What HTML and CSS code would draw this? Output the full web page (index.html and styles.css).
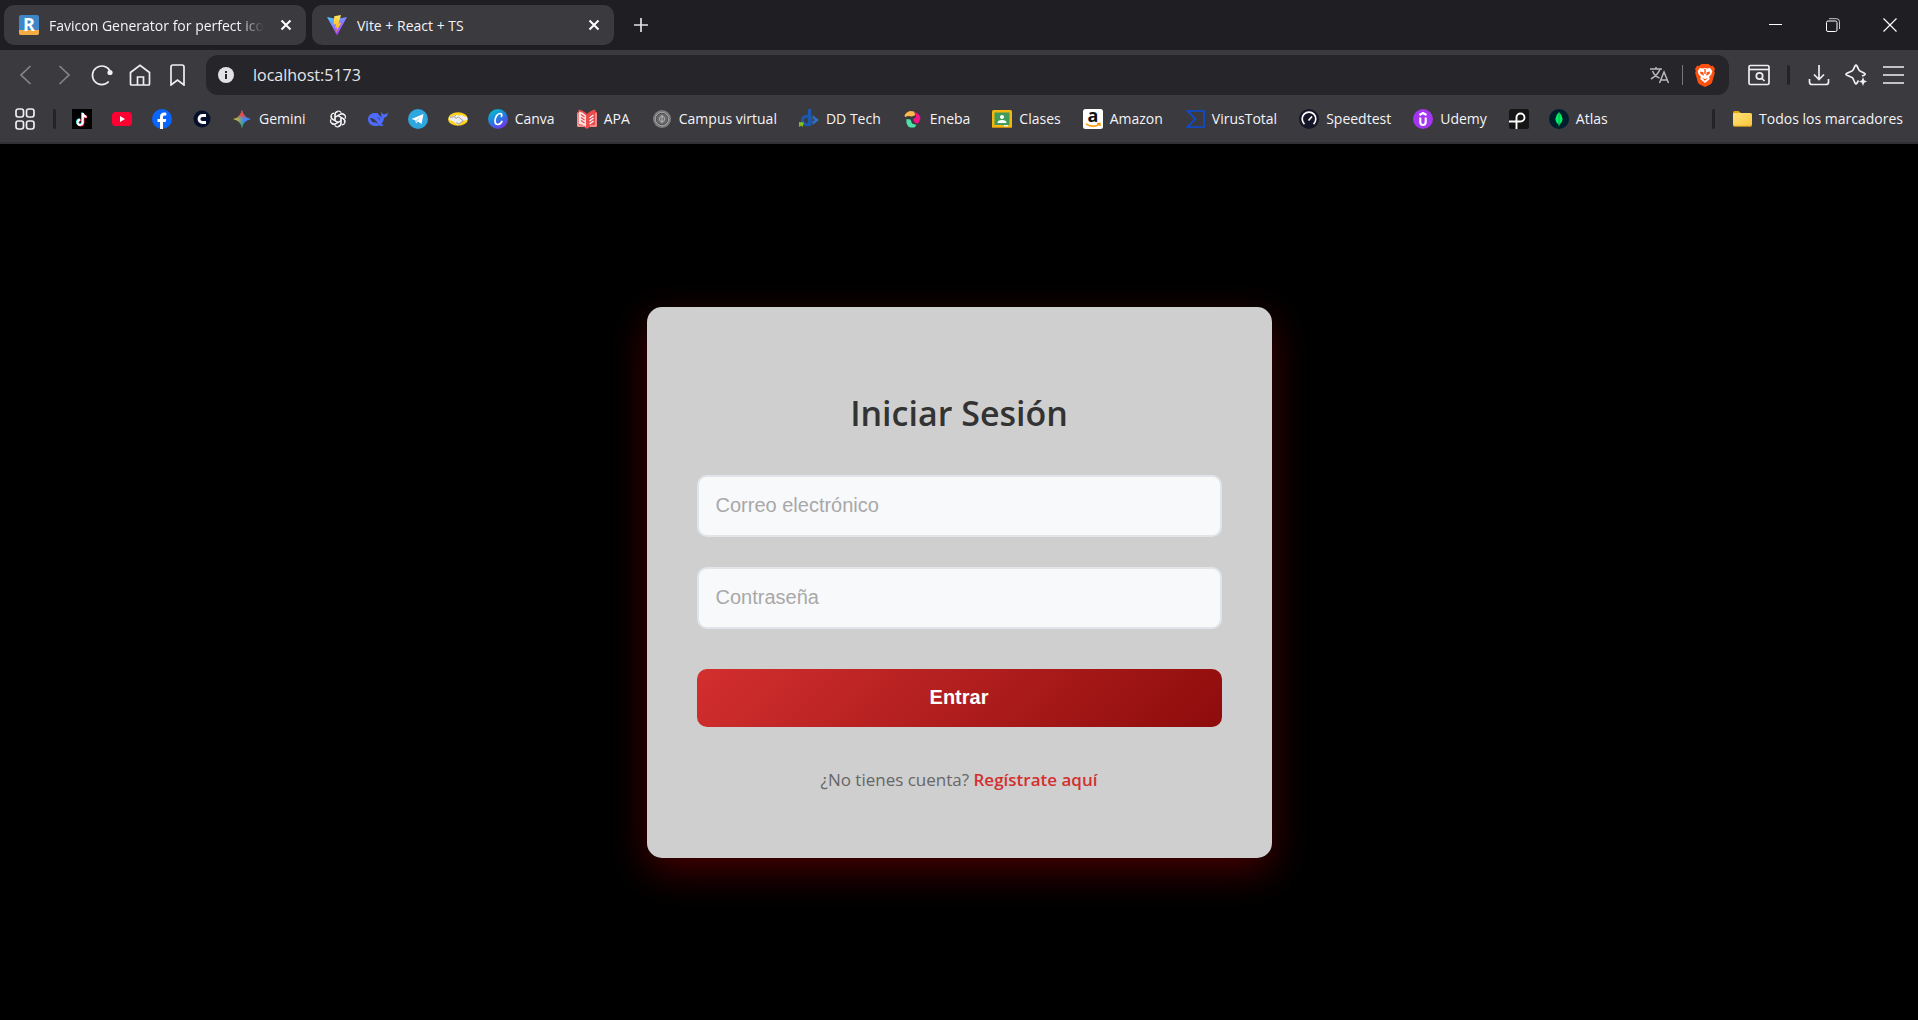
FILE: index.html
```html
<!DOCTYPE html>
<html lang="es">
<head>
<meta charset="utf-8">
<meta name="viewport" content="width=device-width, initial-scale=1">
<title>Vite + React + TS</title>
<link rel="stylesheet" href="styles.css">
</head>
<body>
<header class="browser">
  <div class="tabstrip">
    <div class="tabs">
      <div class="tab">
        <svg class="icon" viewBox="0 0 20 20" aria-hidden="true"><rect width="20" height="20" rx="2" fill="#3f86c8"/><path d="M0 15h20v3a2 2 0 0 1-2 2H2a2 2 0 0 1-2-2z" fill="#f2ac43"/><text x="10" y="16" text-anchor="middle" font-size="18" class="glyph-bold" fill="#fff">R</text></svg>
        <span class="tab-title tab-title-long">Favicon Generator for perfect icons</span>
        <button class="tab-close" aria-label="Cerrar pestaña"><svg width="12" height="12" viewBox="0 0 12 12"><path d="M1.500 1.500l9 9M10.500 1.500l-9 9" stroke="#fff" stroke-width="2"/></svg></button>
      </div>
      <div class="tab">
        <svg class="icon" viewBox="0 0 20 20" aria-hidden="true"><defs><linearGradient id="vite" x1="0" y1="0" x2=".6" y2="1"><stop offset="0" stop-color="#41d1ff"/><stop offset="1" stop-color="#bd34fe"/></linearGradient><linearGradient id="bolt" x1="0" y1="0" x2="0" y2="1"><stop offset="0" stop-color="#ffea60"/><stop offset="1" stop-color="#ffa800"/></linearGradient></defs><path d="M0 2l10 2 10-2-9.500 17.500q-.5.8-1 0z" fill="url(#vite)"/><path d="M14 0L7.300 1.300 6.500 9.500l2.500-.5-.8 4 2-.6-1.300 4.800L14.200 8l-2.700.5z" fill="url(#bolt)"/></svg>
        <span class="tab-title">Vite + React + TS</span>
        <button class="tab-close" aria-label="Cerrar pestaña"><svg width="12" height="12" viewBox="0 0 12 12"><path d="M1.500 1.500l9 9M10.500 1.500l-9 9" stroke="#fff" stroke-width="2"/></svg></button>
      </div>
    </div>
    <button class="new-tab" aria-label="Nueva pestaña"><svg width="14" height="14" viewBox="0 0 14 14"><path d="M7 0v14M0 7h14" stroke="#e2e1e5" stroke-width="1.700"/></svg></button>
    <div class="window-controls">
      <button aria-label="Minimizar"><svg width="14" height="14" viewBox="0 0 14 14"><path d="M0 6.500h13" stroke="#fff"/></svg></button>
      <button aria-label="Restaurar"><svg width="14" height="14" viewBox="0 0 14 14" fill="none" stroke="#fff"><rect x=".5" y="3" width="10.500" height="10.500" rx="1.500"/><path d="M3 .7h7.500q3 0 3 3V11" stroke-opacity=".75"/></svg></button>
      <button aria-label="Cerrar"><svg width="14" height="14" viewBox="0 0 14 14"><path d="M.5.5l13 13M13.500.5l-13 13" stroke="#fff" stroke-width="1.200"/></svg></button>
    </div>
  </div>

  <div class="toolbar">
    <nav class="tools" aria-label="Navegación">
      <button aria-label="Atrás"><svg class="muted" width="22" height="22" viewBox="0 0 22 22"><path d="M15.500 2L6 11l9.500 9"/></svg></button>
      <button aria-label="Adelante"><svg class="muted" width="22" height="22" viewBox="0 0 22 22"><path d="M6.500 2L16 11l-9.500 9"/></svg></button>
      <button aria-label="Recargar"><svg width="22" height="22" viewBox="0 0 22 22"><path d="M17.700 17.500A9.300 9.300 0 1 1 19 7"/><circle cx="19" cy="8.500" r="2.600" fill="#efeef2" stroke="none"/></svg></button>
      <button aria-label="Inicio"><svg width="22" height="22" viewBox="0 0 22 22"><path d="M1.500 8.500L11 1.300l9.500 7.200V20q0 1-1 1h-5v-8h-6v8h-6q-1 0-1-1z M8.500 21h6"/></svg></button>
      <button aria-label="Añadir marcador"><svg width="22" height="22" viewBox="0 0 22 22"><path d="M4 3q0-2 2-2h9q2 0 2 2v18l-6.500-5L4 21z"/></svg></button>
    </nav>
    <div class="omnibox">
      <svg width="16" height="16" viewBox="0 0 16 16" aria-hidden="true"><circle cx="8" cy="8" r="8" fill="#e3e1e6"/><path d="M8 4v2M8 7v5" stroke="#26252a" stroke-width="2"/></svg>
      <input class="address" type="text" aria-label="Dirección" value="localhost:5173">
      <button class="plain" aria-label="Traducir"><svg width="20" height="18" viewBox="0 0 20 18" fill="none" stroke="#b9b8bd" stroke-width="1.500"><path d="M0 3h12M6 1v2M10 3Q8 9 1 13M2.500 5q2 5 7 7M9.500 17l4.500-11 4.500 11M11 14h6"/></svg></button>
      <span class="divider-thin"></span>
      <button class="plain" aria-label="Brave Shields"><svg width="20" height="23" viewBox="0 0 20 23"><path d="M4 2l2.500-2h7L16 2l2-.2L20 5l-.8 2 .6 2-2.600 9q-.5 1.500-2 2.500L10 23l-5.200-2.500q-1.500-1-2-2.500L.2 9l.6-2L0 5l2-3.200z" fill="#fb5010"/><path d="M5 4l3 .4L10 4l2 .4 3-.4 2.300 3-.8 3-2.500 3 .8 2-4.800 4-4.800-4 .8-2-2.500-3-.8-3z" fill="#fff"/><path d="M5 7.500l3.300.8.6 3.500L5.500 10zM15 7.500l-3.300.8-.6 3.500 3.400-1.800zM7 14l3 1 3-1-3 2.700zM9.300 5h1.400v5H9.300z" fill="#fb5010"/></svg></button>
    </div>
    <div class="tools tools-end">
      <button aria-label="Buscar en la página"><svg width="22" height="22" viewBox="0 0 22 22"><rect x="1" y="1.500" width="20" height="19" rx="1.500"/><path d="M1 5.500h20"/><circle cx="11.500" cy="12" r="3.200"/><path d="M14 14.500l2.500 2.500"/></svg></button>
      <span class="divider"></span>
      <button aria-label="Descargas"><svg width="22" height="22" viewBox="0 0 22 22"><path d="M11 1v14M6 10.500l5 5 5-5M1.500 15v3q0 2.500 2.500 2.500h14q2.500 0 2.500-2.500v-3"/></svg></button>
      <button aria-label="Leo"><svg width="22" height="22" viewBox="0 0 22 22"><path d="M13.500 16.500L12 19q-1 2-2 0l-2-4.500q-.3-.7-1-1L2 11.300q-2-1 0-2L7 7q.7-.3 1-1l2-4q1-2 2 0l2 4q.3.700 1 1l4 2q2 1 .5 2L17 12"/><path d="M18 13l1.200 3.300L22 17.500l-2.800 1.200L18 22l-1.200-3.300-2.800-1.200 2.800-1.200z" fill="#efeef2" stroke="none"/></svg></button>
      <button aria-label="Menú"><svg width="22" height="22" viewBox="0 0 22 22"><path d="M1 3h21M1 11h21M1 19h21"/></svg></button>
    </div>
  </div>

  <nav class="bookmarks" aria-label="Marcadores">
    <button class="plain" aria-label="Aplicaciones"><svg class="icon" viewBox="0 0 20 20" fill="none" stroke="#efeef2" stroke-width="1.700"><rect x="1" y="0" width="7.500" height="8" rx="2.200"/><rect x="11.500" y="0" width="7.500" height="8" rx="2.200"/><rect x="1" y="12" width="7.500" height="8" rx="2.200"/><rect x="11.500" y="12" width="7.500" height="8" rx="2.200"/></svg></button>
    <span class="divider"></span>
    <a href="#" aria-label="TikTok"><svg class="icon" viewBox="0 0 20 20"><path d="M0 0h20v20H0z"/><g fill="none" stroke-width="2"><path d="M10.200 3.500v9.300a2.600 2.600 0 1 1-2.600-2.600M10.200 4q.6 3 3.800 3.200" stroke="#25f4ee"/><path d="M11.400 4.500v9.300a2.600 2.600 0 1 1-2.600-2.600M11.400 5q.6 3 3.800 3.200" stroke="#fe2c55"/><path d="M10.800 4v9.300a2.600 2.600 0 1 1-2.600-2.600M10.800 4.500q.6 3 3.800 3.200" stroke="#fff"/></g></svg></a>
    <a href="#" aria-label="YouTube"><svg class="icon" viewBox="0 0 20 20"><rect y="3" width="20" height="14" rx="3.500" fill="#ff0033"/><path d="M8 7l5 3-5 3z" fill="#fff"/></svg></a>
    <a href="#" aria-label="Facebook"><svg class="icon" viewBox="0 0 20 20"><circle cx="10" cy="10" r="10" fill="#0866ff"/><path d="M8 20v-7H5.500v-3H8V8.200C8 5 9.500 3.500 12.300 3.500q1.200 0 2 .2v2.700h-1.500c-1.400 0-1.800.6-1.800 1.800V10h3.200l-.6 3H11v7z" fill="#fff"/></svg></a>
    <a href="#" aria-label="C"><svg class="icon" viewBox="0 0 20 20"><circle cx="10" cy="10" r="8.500" fill="#050e2b"/><path d="M14 6.500h-3.500a3.500 3.500 0 0 0 0 7H14" fill="none" stroke="#fff" stroke-width="2.800"/></svg></a>
    <a href="#"><svg class="icon" viewBox="0 0 20 20"><defs><linearGradient id="gem" x1="0" y1=".5" x2="1" y2=".5"><stop offset="0" stop-color="#fbc02d"/><stop offset=".35" stop-color="#7fae6b"/><stop offset=".6" stop-color="#4285f4"/><stop offset="1" stop-color="#3c8cff"/></linearGradient><linearGradient id="gem2" x1="0" y1="0" x2="0" y2="1"><stop offset="0" stop-color="#f2473f"/><stop offset=".25" stop-color="#f2473f"/><stop offset=".5" stop-color="#f2473f" stop-opacity="0"/><stop offset=".6" stop-color="#27a85a" stop-opacity="0"/><stop offset="1" stop-color="#27a85a"/></linearGradient></defs><path d="M10 1q1.500 7.500 9 9-7.500 1.500-9 9-1.500-7.500-9-9 7.500-1.500 9-9z" fill="url(#gem)"/><path d="M10 1q1.500 7.500 9 9-7.500 1.500-9 9-1.500-7.500-9-9 7.500-1.500 9-9z" fill="url(#gem2)"/></svg><span>Gemini</span></a>
    <a href="#" aria-label="ChatGPT"><svg class="icon" viewBox="0 0 20 20" fill="none" stroke="#f3f3f3" stroke-width="1.200"><defs><path id="petal" d="M7 11.700V5.500a3.400 3.400 0 0 1 6.300-1.700M7 8.300l5-2.900a3.400 3.400 0 0 1 4.200.8"/></defs><use href="#petal"/><use href="#petal" transform="rotate(60 10 10)"/><use href="#petal" transform="rotate(120 10 10)"/><use href="#petal" transform="rotate(180 10 10)"/><use href="#petal" transform="rotate(240 10 10)"/><use href="#petal" transform="rotate(300 10 10)"/></svg></a>
    <a href="#" aria-label="DeepSeek"><svg class="icon" viewBox="0 0 20 20"><path d="M0 10.500c0-4 3-6.500 6.500-6.500 1.500 0 3-.3 3.500.3-.3.700.5 1.200 1.500 2 1 .7 1.500 1.500 2.200 2.500.3-1-1.200-3.300-.2-5.800q1 2 2.500 2.500Q18 5.300 20 3.500c-.3 3.200-1.800 5-4 5.300-.2 3-1.500 4.700-2.700 6 .7.800 1.700 1 2.700 1.200-2 1.300-4 1-5 .5C5 18.500 0 15 0 10.500z" fill="#4d6bfe"/><path d="M2 9c3-.5 5.500 2 8 5.500-3-1-3.500-1.500-4.500-1-1.500-1-3-2-3.500-4.500zM9 8.500c2-.5 3.500.7 3 2.500-.7-1-1.500-2-3-2.500z" fill="#3b3a3f"/></svg></a>
    <a href="#" aria-label="Telegram"><svg class="icon" viewBox="0 0 20 20"><circle cx="10" cy="10" r="10" fill="#2ea6de"/><path d="M3.500 10L15.500 5l-2 10-3.500-2.500-2 2-.7-3.300z" fill="#fff"/><path d="M7.500 11.500L13 7.500l-4 5-.8 1.800z" fill="#b8dcf0"/></svg></a>
    <a href="#" aria-label="Mercado Libre"><svg class="icon" viewBox="0 0 20 20"><ellipse cx="10" cy="10" rx="10" ry="6.700" fill="#ffd21c"/><path d="M1 8q4 0 6-2l4 .5 3-.5q2 2 5 2v3l-4 1-4 3.500q-1.500.5-3-.8L4.500 12 1 11z" fill="#eeeef0"/><path d="M2 8.500q4-.5 6-2M6.500 8.500q2 1.500 4-.5l5 4M8 13.500l3 1.500 4-3" fill="none" stroke="#8a8c98" stroke-width=".8"/></svg></a>
    <a href="#"><svg class="icon" viewBox="0 0 20 20"><defs><linearGradient id="canva" x1=".2" y1="0" x2=".8" y2="1"><stop offset="0" stop-color="#00c4cc"/><stop offset=".5" stop-color="#2878e2"/><stop offset="1" stop-color="#7d2ae8"/></linearGradient></defs><circle cx="10" cy="10" r="10" fill="url(#canva)"/><path d="M13.500 7.500q1-3-1.500-3c-3 0-5 4-5 7.500 0 2 1 3.500 2.700 3.500 2 0 3.300-1.300 4.200-3" fill="none" stroke="#fff" stroke-width="1.700" stroke-linecap="round"/></svg><span>Canva</span></a>
    <a href="#"><svg class="icon" viewBox="0 0 20 20"><path d="M0 3h1.500V.5Q6 1 10 5q4-4 8.500-4.500V3H20v15h-7l-3 2-3-2H0z" fill="#ed4b4b"/><path d="M2 2.500Q6 3 9 6.500V18Q6 15 2 15z" fill="#fbe3e1"/><path d="M4 5.500L7.500 8M4 8.500L7.500 11M4 11.500L7.500 14" stroke="#ed4b4b" stroke-width="1.200"/><path d="M12.500 9l4-3M12.500 12l4-3M12.500 15l4-3" stroke="#fff" stroke-width="1.300"/><path d="M1 4v13h6M19 4v13h-6" fill="none" stroke="#fff" stroke-width=".7"/></svg><span>APA</span></a>
    <a href="#"><svg class="icon" viewBox="0 0 20 20" fill="none"><circle cx="10" cy="10" r="9" fill="#7d7d7f"/><circle cx="10" cy="10" r="6.500" stroke="#aaa"/><circle cx="10" cy="10" r="5.700" fill="#6b6b6d" stroke="#515153"/><circle cx="10" cy="10" r="2.600" stroke="#aaa"/><path d="M10 6v8" stroke="#bbb"/></svg><span>Campus virtual</span></a>
    <a href="#"><svg class="icon" viewBox="0 0 20 20" fill="none"><circle cx="7.800" cy="11.500" r="4.300" stroke="#1c58ae" stroke-width="3"/><path d="M10.500 0v17" stroke="#1c58ae" stroke-width="3.400"/><path d="M13.500 6l6.500 5-6.500 5v-3.500L16 11l-2.500-1.500z" fill="#2f6fc0"/><path d="M0 13l5 .5L3.500 18 2 16.500.5 18l-.5-1z" fill="#86c01a"/></svg><span>DD Tech</span></a>
    <a href="#"><svg class="icon" viewBox="0 0 20 20"><path d="M1.500 6.500Q3 3 7 2l4 .5L12.500 6 9 7.500 5 7l-3 1z" fill="#ffb84d"/><path d="M12 3q5 2 5.500 6.500L15.500 14l-3 .5-2.500-4 3-2.500z" fill="#f5138a"/><path d="M3.500 10l4 .5 1.500 4 4.500 1.500-2 2.500H7q-4.500-2-3.500-8.500z" fill="#4de0a8"/></svg><span>Eneba</span></a>
    <a href="#"><svg class="icon" viewBox="0 0 20 20"><rect y="1" width="20" height="18" rx="1.500" fill="#f4b70f"/><rect x="2.500" y="3.500" width="15" height="12.500" fill="#3f9c5a"/><circle cx="10" cy="8" r="2" fill="#fff"/><path d="M5.500 14q0-3 4.500-3t4.500 3z" fill="#fff"/><path d="M12 16h4v1.500h-4z" fill="#eee"/><path d="M1 18.500h18" stroke="#c2870b"/></svg><span>Clases</span></a>
    <a href="#"><svg class="icon" viewBox="0 0 20 20"><rect width="20" height="20" rx="2.500" fill="#fff"/><text x="10" y="13" text-anchor="middle" font-size="18" class="glyph-bold" fill="#111">a</text><path d="M3 14.800q7 4.700 13.500.4M14 14.500h3v2.500" fill="none" stroke="#f90" stroke-width="1.400"/></svg><span>Amazon</span></a>
    <a href="#"><svg class="icon" viewBox="0 0 20 20" fill="none"><path d="M2.500 2H19v16H2.500l8-8z" stroke="#0b4dda" stroke-width="1.700"/></svg><span>VirusTotal</span></a>
    <a href="#"><svg class="icon" viewBox="0 0 20 20" fill="none"><circle cx="10" cy="10" r="10" fill="#141526"/><path d="M5.500 15a6.800 6.800 0 1 1 9 0" stroke="#fff" stroke-width="1.700"/><path d="M9.500 11.500L13 7.500" stroke="#fff" stroke-width="1.700"/></svg><span>Speedtest</span></a>
    <a href="#"><svg class="icon" viewBox="0 0 20 20" fill="none"><circle cx="10" cy="10" r="10" fill="#a435f0"/><path d="M6.500 6L10 4l3.500 2M7.300 8.500v4.500q0 3 2.700 3t2.700-3V8.500" stroke="#fff" stroke-width="2.100"/></svg><span>Udemy</span></a>
    <a href="#" aria-label="P"><svg class="icon" viewBox="0 0 20 20" fill="none"><rect width="20" height="20" rx="2.500" fill="#151515"/><path d="M0 12.500h11.500a4 4 0 1 0-4-4V20" stroke="#fff" stroke-width="1.900"/></svg></a>
    <a href="#"><svg class="icon" viewBox="0 0 20 20"><circle cx="10" cy="10" r="10" fill="#001e2b"/><path d="M10 3q7 7 .3 13v1.500h-.6V16Q3 10 10 3z" fill="#00ed64"/><path d="M10 4v12" stroke="#00a648" stroke-width=".8"/></svg><span>Atlas</span></a>
    <div class="all-bookmarks">
      <span class="divider"></span>
      <a href="#"><svg class="icon" viewBox="0 0 20 20"><defs><linearGradient id="folder" x1="0" y1="0" x2="1" y2="1"><stop offset="0" stop-color="#ffe07a"/><stop offset="1" stop-color="#fbc73b"/></linearGradient></defs><path d="M1 3.500Q1 2 2.500 2h4L9 4v3H1z" fill="#e5a50f"/><rect x="1" y="4" width="19" height="13" rx="1.500" fill="url(#folder)"/><path d="M1.500 17.300h18" stroke="#d39a1d"/></svg><span>Todos los marcadores</span></a>
    </div>
  </nav>
</header>

<main class="page">
  <form class="login-card" onsubmit="return false">
    <h1 class="login-title">Iniciar Sesión</h1>
    <input class="field" type="email" aria-label="Correo electrónico" placeholder="Correo electrónico">
    <input class="field" type="password" aria-label="Contraseña" placeholder="Contraseña">
    <button class="submit" type="submit">Entrar</button>
    <p class="register">¿No tienes cuenta? <a href="#">Regístrate aquí</a></p>
  </form>
</main>
</body>
</html>
```
FILE: styles.css
```css
* { box-sizing: border-box; }

body {
  margin: 0;
  min-height: 100vh;
  display: flex;
  flex-direction: column;
  background: #000;
  font-family: "Open Sans", "Noto Sans", sans-serif;
}

button {
  display: flex;
  align-items: center;
  justify-content: center;
  padding: 0;
  border: 0;
  background: none;
  font: inherit;
}

svg { display: block; flex: none; }
.icon { width: 20px; height: 20px; overflow: visible; }
.glyph-bold { font-family: "Open Sans", sans-serif; font-weight: 700; }

/* Browser frame */
.browser {
  background: #3b3a3f;
  border-bottom: 2px solid #313035;
  color: #f4f3f6;
  font-size: 14px;
}

.tabstrip {
  display: flex;
  align-items: center;
  height: 50px;
  padding-left: 4px;
  background: #1f1e23;
}
.tabs { display: flex; gap: 6px; }
.tab {
  display: flex;
  align-items: center;
  gap: 10px;
  width: 302px;
  height: 40px;
  padding: 0 13px 0 15px;
  border-radius: 10px;
  background: #3b3a3f;
}
.tab-title {
  flex: 1;
  min-width: 0;
  overflow: hidden;
  white-space: nowrap;
}
.tab-title-long {
  margin-right: 5px;
  -webkit-mask-image: linear-gradient(to right, #000 88%, transparent);
  mask-image: linear-gradient(to right, #000 88%, transparent);
}
.tab-close { width: 14px; height: 20px; }
.new-tab { width: 40px; height: 40px; margin-left: 7px; }
.window-controls { display: flex; margin-left: auto; }
.window-controls button { width: 57px; height: 50px; }

.toolbar {
  display: flex;
  align-items: center;
  gap: 9px;
  padding: 5px 7px 0;
}
.tools { display: flex; align-items: center; }
.tools button { width: 38px; height: 40px; }
.tools svg { fill: none; stroke: #efeef2; stroke-width: 1.7; }
.tools .muted { stroke: #85848a; }
.tools-end { margin-left: 2px; }
.tools-end button { width: 37px; }
.tools .divider { margin: 0 10px; }
.divider {
  width: 3px;
  height: 20px;
  border-radius: 2px;
  background: #242328;
}
.divider-thin { width: 1px; height: 20px; background: #77767b; }

.omnibox {
  flex: 1;
  display: flex;
  align-items: center;
  gap: 12px;
  height: 40px;
  padding: 0 14px 0 12px;
  border-radius: 12px;
  background: #26252a;
}
.address {
  flex: 1;
  min-width: 0;
  margin-left: 7px;
  padding: 0;
  border: 0;
  outline: 0;
  background: none;
  color: #e6e5e9;
  font: inherit;
  font-size: 16px;
}

.bookmarks {
  display: flex;
  align-items: center;
  gap: 20px;
  height: 47px;
  padding: 0 15px;
}
.bookmarks > .divider { margin: 0 -4px 0 -2px; }
.bookmarks a {
  display: flex;
  align-items: center;
  gap: 7px;
  color: inherit;
  text-decoration: none;
  white-space: nowrap;
}
.bookmarks > a span { padding-right: 2px; }
.all-bookmarks {
  display: flex;
  align-items: center;
  gap: 17px;
  margin-left: auto;
}

/* Login page */
.page {
  flex: 1;
  display: flex;
  align-items: center;
  justify-content: center;
  padding: 24px;
}
.login-card {
  display: flex;
  flex-direction: column;
  width: 100%;
  max-width: 625px;
  padding: 80px 50px 65px;
  border-radius: 15px;
  background: #cfcfcf;
  box-shadow: 0 13px 38px rgba(255, 0, 0, .28);
}
.login-title {
  margin: 0 0 36px;
  color: #333;
  font-size: 34px;
  font-weight: 600;
  line-height: 52px;
  text-align: center;
}
.field {
  height: 62px;
  margin-bottom: 30px;
  padding: 0 17px;
  border: 2px solid #e1e5e9;
  border-radius: 10px;
  background: #f8f9fb;
  color: #333;
  font-family: "Liberation Sans", Arial, sans-serif;
  font-size: 20px;
}
.field::placeholder { color: #a8a8a8; opacity: 1; }
.submit {
  height: 58px;
  margin: 10px 0 40px;
  border-radius: 10px;
  background: linear-gradient(135deg, #d32f2f, #8e0c0c);
  color: #fff;
  font-family: "Liberation Sans", Arial, sans-serif;
  font-size: 20px;
  font-weight: 700;
}
.register {
  margin: 0;
  color: #666;
  font-size: 17px;
  line-height: 26px;
  text-align: center;
}
.register a { color: #d32f2f; font-weight: 600; text-decoration: none; }
```
